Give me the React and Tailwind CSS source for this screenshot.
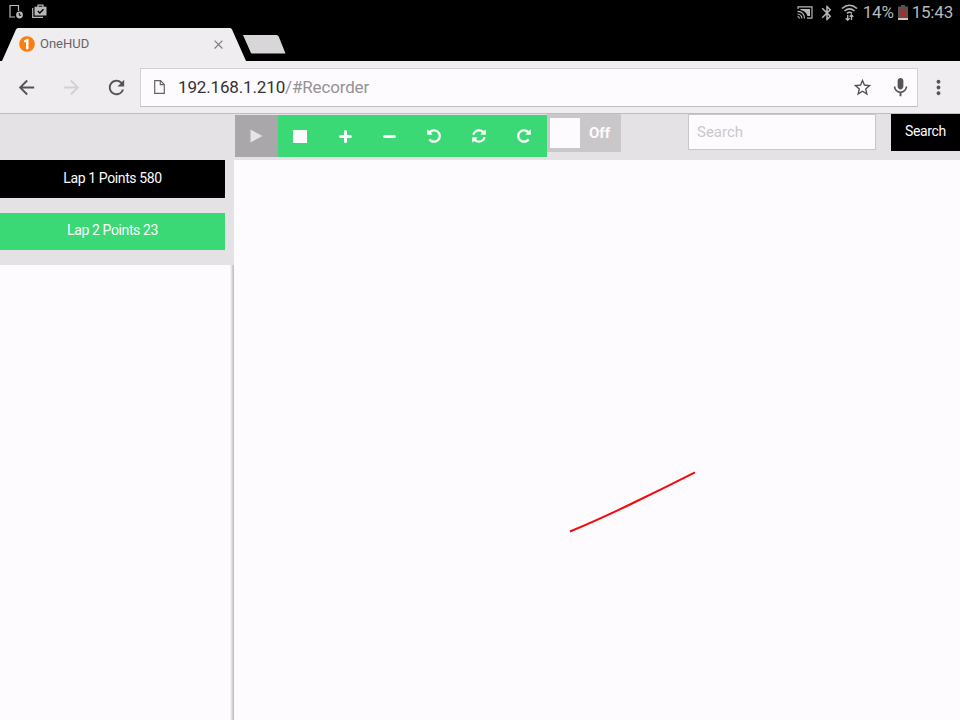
import React from "react";
import {
  MdArrowBack,
  MdArrowForward,
  MdRefresh,
  MdStarBorder,
  MdMic,
  MdMoreVert,
  MdBluetooth,
  MdClose,
} from "react-icons/md";

const REPEAT =
  "M1664 256v448q0 26-19 45t-45 19h-448q-42 0-59-40-17-39 14-69l138-138q-148-137-349-137-104 0-198.5 40.5t-163.5 109.5-109.5 163.5-40.5 198.5 40.5 198.5 109.5 163.5 163.5 109.5 198.5 40.5q119 0 225-52t179-147q7-10 23-12 15 0 25 9l137 138q9 8 9.5 20.5t-7.5 22.5q-109 132-264 204.5t-327 72.5q-156 0-298-61t-245-164-164-245-61-298 61-298 164-245 245-164 298-61q147 0 284.5 55.5t244.5 156.5l130-129q29-31 70-14 39 17 39 59z";
const REFRESH =
  "M1511 1056q0 5-1 7-64 268-268 434.5t-478 166.5q-146 0-282.5-55t-243.5-157l-129 129q-19 19-45 19t-45-19-19-45v-448q0-26 19-45t45-19h448q26 0 45 19t19 45-19 45l-137 137q71 66 161 102t187 36q134 0 250-65t186-179q11-17 53-117 8-23 30-23h192q13 0 22.5 9.5t9.5 22.5zm25-800v448q0 26-19 45t-45 19h-448q-26 0-45-19t-19-45 19-45l138-138q-148-137-349-137-134 0-250 65t-186 179q-11 17-53 117-8 23-30 23h-199q-13 0-22.5-9.5t-9.5-22.5v-7q65-268 270-434.5t480-166.5q146 0 284 55.5t245 156.5l130-129q19-19 45-19t45 19 19 45z";

function StatusBar() {
  return (
    <div className="flex h-[28px] items-start justify-between bg-black pl-[8px] pr-[7px] text-[#b9b7b9]">
      <div className="flex gap-[8px] pt-[4px]">
        <svg className="h-[16px] w-[16px]" viewBox="0 0 16 16" fill="none" stroke="currentColor">
          <path d="M7 13H2V1.5h8.5V7" strokeWidth="1.2" />
          <circle cx="11.5" cy="11" r="3.4" fill="currentColor" stroke="none" />
          <path d="M11.3 9v2.3h1.9" stroke="#000" />
        </svg>
        <svg className="h-[16px] w-[15px]" viewBox="0 0 15 16" fill="none" stroke="currentColor">
          <path d="M.7 4v9.3H11" strokeWidth="1.2" />
          <path d="M6 3V1.2h5V3" strokeWidth="1.3" />
          <path d="M2.5 2.7h12v8.8h-12z" fill="currentColor" stroke="none" />
          <path d="M5.8 7l2 2 3.7-3.8" stroke="#000" strokeWidth="1.3" />
        </svg>
      </div>
      <div className="flex items-center">
        <svg className="h-[13px] w-[16px]" viewBox="0 0 16 13" fill="none" stroke="currentColor">
          <path d="M1 3V.8h14v11.4h-5" strokeWidth="1.2" />
          <path d="M3.5 3H13v7H10.5Q9 5 3.5 4z" fill="currentColor" stroke="none" />
          <path d="M.5 5.4q6.5 0 7 7M.5 8q4 .3 4.5 4.5M.5 10.5q1.6 0 2 2" strokeWidth="1.2" />
        </svg>
        <MdBluetooth className="ml-[5px] h-[18px] w-[18px]" />
        <svg className="ml-[5px] h-[17px] w-[17px]" viewBox="0 0 17 17" fill="none" stroke="currentColor" strokeWidth="1.6">
          <path d="M1 4.5q7.5-6.5 15 0M3.500 7q5-4.200 10 0M6 9.3q2.5-2 5 0" />
          <path d="M6.7 16v-5M4.7 14.2l2 2 2-2M10.5 16v-5M8.7 12.7l1.8-1.800 1.8 1.800" strokeWidth="1.3" />
        </svg>
        <span className="ml-[5px] w-[33px] whitespace-nowrap text-[17px] leading-[25px] tracking-[-0.1px]">14%</span>
        <svg className="ml-[2px] h-[15px] w-[10px]" viewBox="0 0 10 15">
          <path d="M3 0h4v1.500h3V15H0V1.500h3z" fill="#555154" />
          <path d="M0 13h10v2H0z" fill="#cac8ca" />
          <path d="M2 4l6 8M8 4l-6 8" stroke="#b5281e" strokeWidth="2" />
        </svg>
        <span className="ml-[4px] whitespace-nowrap text-[17px] leading-[25px] tracking-[-0.2px]">15:43</span>
      </div>
    </div>
  );
}

function TabStrip() {
  return (
    <div className="relative h-[33px] bg-black">
      <svg className="absolute inset-0 h-[33px] w-[300px]" viewBox="0 0 300 33">
        <path d="M2 33L16 1.500Q16.700 0 18 0H230Q231.500 0 232 1.500L246 33z" fill="#efedf0" />
        <path d="M243 7H276.500Q278 7 278.700 8.500L285.500 25.500H252Q251 25.500 250.500 24z" fill="#d8d6d8" />
      </svg>
      <div className="relative flex h-[32px] w-[226px] items-center pl-[19px]">
        <svg className="h-[16px] w-[16px]" viewBox="0 0 16 16">
          <circle cx="8" cy="8" r="7.8" fill="#fb7d0b" />
          <path d="M4.8 4.8L8 2.7h1.5v10.5H7V5.7L5.3 6.5z" fill="#fff" />
        </svg>
        <span className="ml-[5px] text-[13px] text-[#666467]">OneHUD</span>
        <MdClose className="ml-auto h-[15px] w-[15px] text-[#858386]" />
      </div>
    </div>
  );
}

function AddressBar() {
  return (
    <div className="flex h-[53px] items-center border-b border-[#bfbdbf] bg-[#efedf0] text-[#555357]">
      <MdArrowBack className="ml-[15px] h-[23px] w-[23px]" />
      <MdArrowForward className="ml-[22px] h-[23px] w-[23px] text-[#d3d1d4]" />
      <MdRefresh className="ml-[22px] h-[23px] w-[23px]" />
      <div className="ml-[12px] flex h-[39px] w-[778px] items-center border border-[#d2d0d3] border-b-[#c0bec1] bg-[#fdfbfe]">
        <svg className="ml-[13px] h-[14px] w-[11px]" viewBox="0 0 11 14" fill="none" stroke="#656367" strokeWidth="1.2">
          <path d="M.7.7H6.500L10.300 4.500V13.300H.7zM6.300.7V4.700H10.300" />
        </svg>
        <span className="ml-[13px] whitespace-nowrap pt-[2px] text-[17px] tracking-[-0.15px] text-[#333135]">
          192.168.1.210<span className="text-[#949295]">/#Recorder</span>
        </span>
        <MdStarBorder className="ml-auto h-[21px] w-[21px]" />
        <MdMic className="ml-[16px] mr-[5px] h-[23px] w-[23px]" />
      </div>
      <MdMoreVert className="ml-[9px] h-[23px] w-[23px]" />
    </div>
  );
}

function LapList() {
  return (
    <aside className="flex w-[234px] flex-col bg-[#e4e2e5]">
      <div className="flex h-[151px] flex-col gap-[15px] pr-[9px] pt-[46px] text-center text-[14px] leading-[36px] tracking-[-0.38px] text-[#fdfbfe]">
        <div className="h-[38px] shrink-0 bg-black">Lap 1 Points 580</div>
        <div className="h-[37px] shrink-0 bg-[#3ad976] leading-[35px]">Lap 2 Points 23</div>
      </div>
      <div className="flex flex-1 bg-[#fdfbfe]">
        <div className="ml-auto w-[4px] bg-linear-to-r from-[#fdfbfe] to-[#b9b7ba]" />
      </div>
    </aside>
  );
}

function Glyph({ d, flip, box = "0 0 1792 1792" }) {
  return (
    <svg className={flip ? "mr-[2px] h-[16px] w-[16px] -scale-x-100" : "mr-[2px] h-[16px] w-[16px]"} viewBox={box} fill="currentColor">
      <path d={d} />
    </svg>
  );
}

function RecorderTools() {
  return (
    <div className="flex h-[46px] items-start bg-[#e4e2e5]">
      <div className="ml-px mt-px flex h-[42px] w-[312px] text-[#fdfbfe]">
        <div className="flex w-[43px] items-center justify-center bg-[#a9a7aa]">
          <svg className="h-[14px] w-[13px]" viewBox="0 0 13 14">
            <path d="M.5.5L12.500 7L.5 13.500z" fill="#e6e4e7" />
          </svg>
        </div>
        <div className="grid flex-1 grid-cols-6 place-items-center bg-[#3ad976]">
          <div className="h-[13px] w-[14px] bg-[#fdfbfe]" />
          <svg className="h-[13px] w-[13px]" viewBox="0 0 12 12" stroke="currentColor" strokeWidth="2.8" strokeLinecap="round">
            <path d="M6 1.500v9M1.500 6h9" />
          </svg>
          <svg className="mr-px h-[13px] w-[13px]" viewBox="0 0 12 12" stroke="currentColor" strokeWidth="2.8" strokeLinecap="round">
            <path d="M1.500 6h9" />
          </svg>
          <Glyph d={REPEAT} flip />
          <Glyph d={REFRESH} box="-128 0 1792 1792" />
          <Glyph d={REPEAT} />
        </div>
      </div>
      <div className="flex h-[38px] w-[74px] items-center bg-[#c9c7ca]">
        <div className="ml-[3px] h-[30px] w-[30px] bg-[#fdfbfe]" />
        <span className="ml-[9px] text-[15px] font-bold text-[#fdfbfe]">Off</span>
      </div>
      <input
        className="ml-[67px] h-[36px] w-[188px] rounded-none border border-[#c9c7ca] bg-[#fdfbfe] px-[8px] text-[15px] placeholder:text-[#cac8cb]"
        placeholder="Search"
      />
      <button className="ml-[15px] h-[37px] flex-1 bg-black pb-[2px] text-[14px] tracking-[-0.35px] text-[#fdfbfe]">Search</button>
    </div>
  );
}

export default function App() {
  return (
    <div className="flex h-[720px] w-[960px] flex-col overflow-hidden bg-[#fdfbfe] font-[Roboto,sans-serif]">
      <StatusBar />
      <TabStrip />
      <AddressBar />
      <main className="flex min-h-0 flex-1">
        <LapList />
        <section className="flex flex-1 flex-col">
          <RecorderTools />
          <svg className="h-[560px] w-[726px]" viewBox="234 160 726 560" fill="none">
            <path d="M570 531.500Q599 519.500 632 503.500T695 472.300" stroke="#f40a0c" strokeWidth="2" />
          </svg>
        </section>
      </main>
    </div>
  );
}
